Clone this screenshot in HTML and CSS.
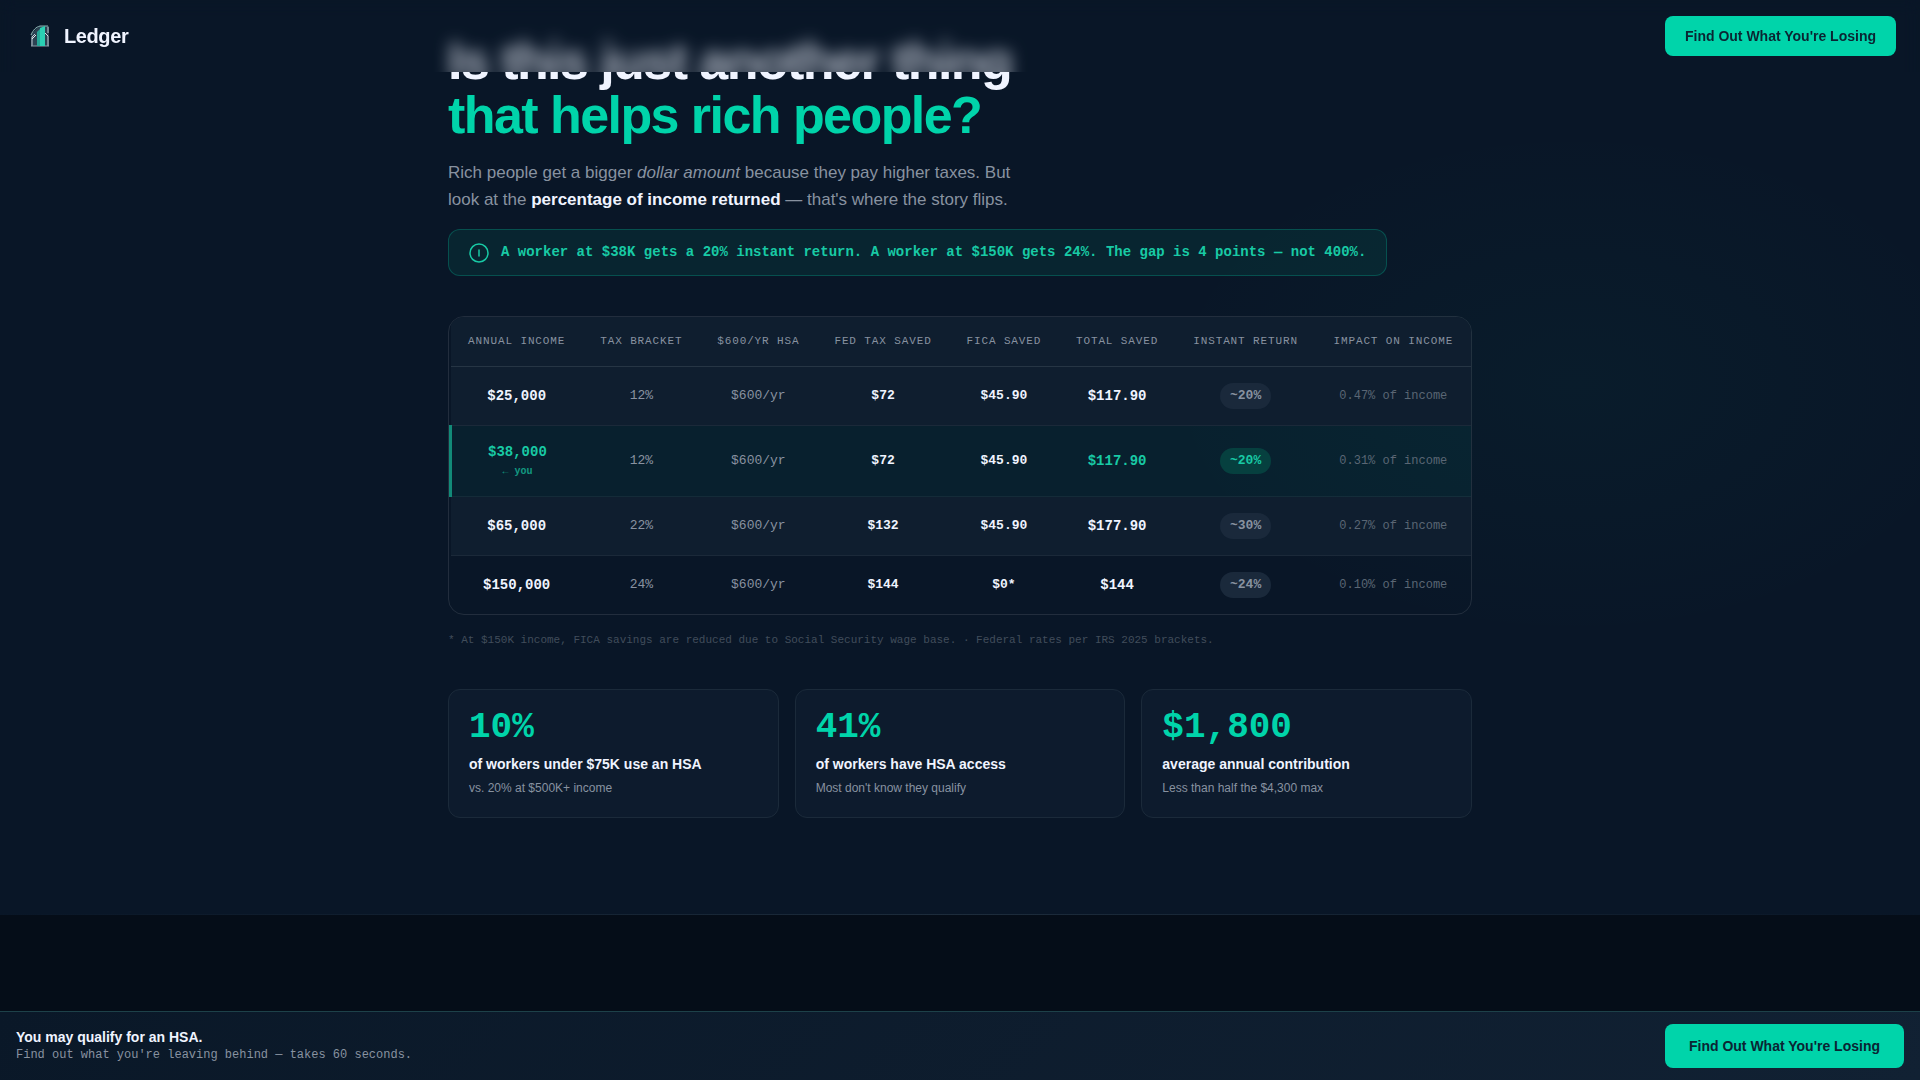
FILE: index.html
```
<!DOCTYPE html>
<html lang="en">
<head>
    <meta charset="UTF-8">
    <meta name="viewport" content="width=device-width, initial-scale=1.0">
    <title>Ledger</title>
    <link rel="stylesheet" href="styles.css">
</head>
<body>

<nav class="nav">
    <a class="logo" href="#">
        <svg width="32" height="32" viewBox="0 0 32 32" fill="none">
            <path d="M7 26V14l8-8h10v20z" fill="#2c4252"/>
            <path d="M7 15c2-5 5-8 9-9h8" stroke="#8fb5b4"/>
            <path d="M8 26v-9l3-3M24 7v6M24 16v10" stroke="#c3ccd4"/>
            <path d="M7 26h18" stroke="#8b9ca8"/>
            <path d="M13 26V12l3-3v17z" fill="#25a697"/>
            <path d="M16 26V8l5-2v20z" fill="#2bd0b4"/>
            <path d="M8 19l4-4M21 13l3 3" stroke="#e0e6ea"/>
        </svg>
        <span>Ledger</span>
    </a>
    <button class="btn" type="button">Find Out What You're Losing</button>
</nav>

<main>
    <section class="equity">
        <div class="container">
            <h2>Is this just another thing<br><span>that helps rich people?</span></h2>
            <p class="lead">Rich people get a bigger <em>dollar amount</em> because they pay higher taxes. But look at the <strong>percentage of income returned</strong> — that's where the story flips.</p>

            <div class="callout">
                <svg width="20" height="20" viewBox="0 0 20 20" fill="none" stroke="currentColor" stroke-width="1.5">
                    <circle cx="10" cy="10" r="9"/>
                    <path d="M10 7v6" stroke-linecap="round"/>
                </svg>
                <p>A worker at $38K gets a 20% instant return. A worker at $150K gets 24%. The gap is 4 points — not 400%.</p>
            </div>

            <div class="table-wrap">
                <table>
                    <thead>
                        <tr>
                            <th>Annual Income</th>
                            <th>Tax Bracket</th>
                            <th>$600/yr HSA</th>
                            <th>Fed Tax Saved</th>
                            <th>FICA Saved</th>
                            <th>Total Saved</th>
                            <th>Instant Return</th>
                            <th>Impact on Income</th>
                        </tr>
                    </thead>
                    <tbody>
                        <tr>
                            <td class="income">$25,000</td>
                            <td>12%</td>
                            <td>$600/yr</td>
                            <td class="saved">$72</td>
                            <td class="saved">$45.90</td>
                            <td class="total">$117.90</td>
                            <td><span class="pill">~20%</span></td>
                            <td class="impact">0.47% of income</td>
                        </tr>
                        <tr class="you">
                            <td class="income">$38,000<small>← you</small></td>
                            <td>12%</td>
                            <td>$600/yr</td>
                            <td class="saved">$72</td>
                            <td class="saved">$45.90</td>
                            <td class="total">$117.90</td>
                            <td><span class="pill">~20%</span></td>
                            <td class="impact">0.31% of income</td>
                        </tr>
                        <tr>
                            <td class="income">$65,000</td>
                            <td>22%</td>
                            <td>$600/yr</td>
                            <td class="saved">$132</td>
                            <td class="saved">$45.90</td>
                            <td class="total">$177.90</td>
                            <td><span class="pill">~30%</span></td>
                            <td class="impact">0.27% of income</td>
                        </tr>
                        <tr>
                            <td class="income">$150,000</td>
                            <td>24%</td>
                            <td>$600/yr</td>
                            <td class="saved">$144</td>
                            <td class="saved">$0*</td>
                            <td class="total">$144</td>
                            <td><span class="pill">~24%</span></td>
                            <td class="impact">0.10% of income</td>
                        </tr>
                    </tbody>
                </table>
            </div>
            <p class="note">* At $150K income, FICA savings are reduced due to Social Security wage base. · Federal rates per IRS 2025 brackets.</p>

            <div class="stats">
                <div class="stat">
                    <div class="num">10%</div>
                    <div class="label">of workers under $75K use an HSA</div>
                    <div class="sub">vs. 20% at $500K+ income</div>
                </div>
                <div class="stat">
                    <div class="num">41%</div>
                    <div class="label">of workers have HSA access</div>
                    <div class="sub">Most don't know they qualify</div>
                </div>
                <div class="stat">
                    <div class="num">$1,800</div>
                    <div class="label">average annual contribution</div>
                    <div class="sub">Less than half the $4,300 max</div>
                </div>
            </div>
        </div>
    </section>
    <div class="divider"></div>
</main>

<div class="sticky">
    <div>
        <p class="sticky-title">You may qualify for an HSA.</p>
        <p class="sticky-sub">Find out what you're leaving behind — takes 60 seconds.</p>
    </div>
    <button class="btn btn-lg" type="button">Find Out What You're Losing</button>
</div>

</body>
</html>
```
FILE: styles.css
```
:root {
    --teal: #00d4aa;
    --teal-soft: #18caa5;
    --bg: #091627;
    --text: #f0f4ff;
    --muted: #8892a0;
    --line: rgba(255, 255, 255, 0.1);
    --sans: "Liberation Sans", Arial, sans-serif;
    --mono: "Liberation Mono", "Courier New", monospace;
}

* {
    box-sizing: border-box;
    margin: 0;
    padding: 0;
}

body {
    display: flex;
    flex-direction: column;
    height: 100vh;
    overflow: hidden;
    background: #050d18;
    color: var(--text);
    font-family: var(--sans);
}

/* top nav */
.nav {
    position: fixed;
    top: 0;
    left: 0;
    right: 0;
    z-index: 10;
    display: flex;
    align-items: center;
    justify-content: space-between;
    padding: 16px 24px;
}

/* blur layer runs past the bar and is masked, so the lower edge stays solid */
.nav::before {
    content: "";
    position: absolute;
    inset: 0 0 -48px;
    z-index: -1;
    background: rgba(9, 22, 39, 0.3);
    backdrop-filter: blur(8px);
    mask-image: linear-gradient(#000 72px, transparent 72px);
}

.logo {
    display: flex;
    align-items: center;
    gap: 8px;
    color: var(--text);
    font-size: 20px;
    font-weight: 700;
    letter-spacing: -0.02em;
    text-decoration: none;
}

.btn {
    height: 40px;
    padding: 0 20px;
    border: none;
    border-radius: 8px;
    background: var(--teal);
    color: #0a2533;
    font-family: var(--sans);
    font-size: 14px;
    font-weight: 700;
    cursor: pointer;
}

.btn-lg {
    height: 44px;
    padding: 0 24px;
}

main {
    flex: 1;
    min-height: 0;
    overflow: hidden;
}

/* equity section */
.equity {
    padding: 34px 24px 96px;
    background: radial-gradient(ellipse 420px 260px at 82% 42%, rgba(0, 212, 170, 0.03), transparent), var(--bg);
}

.container {
    max-width: 1024px;
    margin: 0 auto;
}

h2 {
    margin-bottom: 17px;
    font-size: 52px;
    line-height: 54px;
    letter-spacing: -0.03em;
}

h2 span {
    color: var(--teal);
}

.lead {
    max-width: 580px;
    margin-bottom: 16px;
    color: var(--muted);
    font-size: 17px;
    line-height: 27px;
}

.lead strong {
    color: var(--text);
}

.callout {
    display: flex;
    align-items: center;
    gap: 12px;
    width: fit-content;
    margin-bottom: 40px;
    padding: 12px 20px;
    border: 1px solid rgba(0, 212, 170, 0.25);
    border-radius: 12px;
    background: rgba(0, 212, 170, 0.08);
    color: var(--teal-soft);
    font-family: var(--mono);
    font-size: 14px;
    font-weight: 700;
    line-height: 21px;
}

/* table */
.table-wrap {
    overflow: hidden;
    border: 1px solid var(--line);
    border-radius: 16px;
}

table {
    width: 100%;
    border-collapse: collapse;
    font-family: var(--mono);
    text-align: center;
}

thead tr,
tbody tr:nth-child(odd) {
    background: #0f1e2f;
}

th {
    padding: 16px;
    border-bottom: 1px solid #263544;
    color: var(--muted);
    font-size: 11px;
    font-weight: 400;
    line-height: 17px;
    letter-spacing: 0.08em;
    text-transform: uppercase;
    white-space: nowrap;
}

td {
    padding: 16px;
    border-bottom: 1px solid rgba(255, 255, 255, 0.05);
    color: var(--muted);
    font-size: 13px;
    line-height: 20px;
}

tbody tr:last-child td {
    border-bottom: none;
}

.income,
.total {
    color: var(--text);
    font-size: 14px;
    font-weight: 700;
}

.saved {
    color: var(--text);
    font-weight: 700;
}

.impact {
    color: #5a6674;
    font-size: 12px;
}

.pill {
    display: inline-block;
    padding: 3px 10px;
    border-radius: 20px;
    background: #1a293b;
    font-weight: 700;
}

tbody .you {
    background: rgba(0, 212, 170, 0.06);
}

.you td:first-child {
    border-left: 3px solid #128a78;
}

.you .income,
.you .total {
    color: var(--teal-soft);
}

.you small {
    display: block;
    margin-top: 2px;
    font-size: 10px;
    line-height: 16px;
    opacity: 0.7;
}

.you .pill {
    background: #06403f;
    color: var(--teal-soft);
}

.note {
    margin: 16px 0 40px;
    color: #414d5b;
    font-family: var(--mono);
    font-size: 11px;
    line-height: 18px;
}

/* stat cards */
.stats {
    display: grid;
    grid-template-columns: repeat(3, 1fr);
    gap: 16px;
}

.stat {
    padding: 20px;
    border: 1px solid #1b2a3a;
    border-radius: 12px;
    background: #0d1b2d;
}

.num {
    margin-bottom: 8px;
    color: var(--teal);
    font-family: var(--mono);
    font-size: 36px;
    font-weight: 700;
    line-height: 36px;
}

.label {
    margin-bottom: 6px;
    font-size: 14px;
    font-weight: 700;
    line-height: 20px;
}

.sub {
    color: var(--muted);
    font-size: 12px;
    line-height: 17px;
}

.divider {
    height: 1px;
    background: linear-gradient(90deg, transparent, #1d2c3c, transparent), var(--bg);
}

/* bottom bar */
.sticky {
    display: flex;
    align-items: center;
    justify-content: space-between;
    padding: 12px 16px;
    border-top: 1px solid #1d4149;
    background: linear-gradient(135deg, #0a1828, #112133);
}

.sticky-title {
    font-size: 14px;
    font-weight: 700;
    line-height: 17px;
}

.sticky-sub {
    color: var(--muted);
    font-family: var(--mono);
    font-size: 12px;
    line-height: 18px;
}
```
